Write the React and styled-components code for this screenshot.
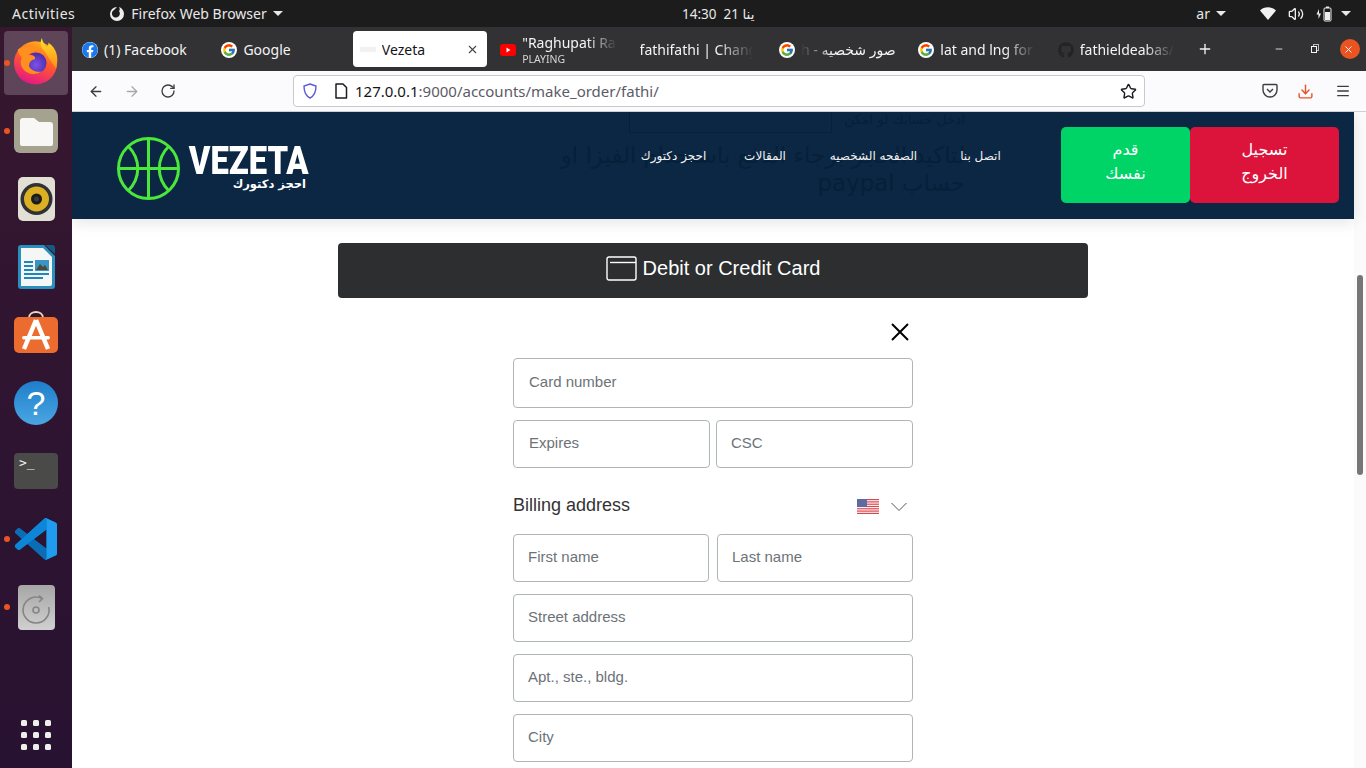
import styled, { createGlobalStyle } from 'styled-components';
import { ArrowLeft, ArrowRight, RotateCw, Star, Download, Menu, X, Plus, Minus, Volume2 } from 'lucide-react';
import { FcGoogle } from 'react-icons/fc';
import { FaFacebook, FaGithub } from 'react-icons/fa';

const uiFont = `"Noto Sans", "DejaVu Sans", sans-serif`;
const arabicFont = `"DejaVu Sans", "Noto Sans", sans-serif`;
const formFont = `"Liberation Sans", Arial, sans-serif`;

const GlobalStyle = createGlobalStyle`
    html, body {
        margin: 0;
        padding: 0;
        width: 1366px;
        height: 768px;
        overflow: hidden;
        background: #2c1430;
    }
    * {
        box-sizing: border-box;
    }
`;

const Desktop = styled.div`
    width: 1366px;
    height: 768px;
    display: grid;
    grid-template-columns: 72px 1fr;
    grid-template-rows: 27px 1fr;
    overflow: hidden;
`;

/* ubuntu top bar */
const TopBar = styled.header`
    grid-column: 1 / 3;
    background: #1c1c1c;
    color: #e8e8e8;
    font: 14px ${uiFont};
    display: grid;
    grid-template-columns: 670px auto 1fr;
    align-items: center;
    padding: 0 12px;
`;

const TopLeft = styled.div`
    display: flex;
    align-items: center;
`;

const Activities = styled.span`
    letter-spacing: 0.5px;
`;

const AppMenu = styled.div`
    display: flex;
    align-items: center;
    gap: 6px;
    margin-left: 34px;
`;

const Caret = styled.span`
    display: inline-block;
    width: 0;
    height: 0;
    border-left: 5px solid transparent;
    border-right: 5px solid transparent;
    border-top: 5px solid #e8e8e8;
`;

const Clock = styled.div`
    display: flex;
    gap: 7px;
    font-size: 13.5px;
`;

const TopRight = styled.div`
    display: flex;
    justify-content: flex-end;
    align-items: center;
    padding-right: 3px;
`;

const Lang = styled.span`
    margin-right: 6px;
`;

const StatusIcon = styled.span`
    display: flex;
    margin-left: ${(p) => p.$gap}px;
`;

/* dock */
const Dock = styled.nav`
    background: linear-gradient(180deg, #37172f 0%, #2d1431 60%, #281231 100%);
    display: flex;
    flex-direction: column;
    align-items: center;
    padding: 2px 0 0;
`;

const DockItem = styled.div`
    position: relative;
    width: 72px;
    height: 68px;
    display: flex;
    align-items: center;
    justify-content: center;
    &::before {
        content: '';
        display: ${(p) => (p.$active ? 'block' : 'none')};
        position: absolute;
        left: 4px;
        top: 2px;
        width: 64px;
        height: 64px;
        border-radius: 4px;
        background: rgba(255, 255, 255, 0.2);
    }
    &::after {
        content: '';
        display: ${(p) => (p.$running ? 'block' : 'none')};
        position: absolute;
        left: 4px;
        top: 31px;
        width: 6px;
        height: 6px;
        border-radius: 50%;
        background: #e95420;
    }
    svg {
        position: relative;
        margin-bottom: ${(p) => p.$lift || 0}px;
    }
`;

const AppGrid = styled.div`
    margin-top: auto;
    margin-bottom: 18px;
    display: grid;
    grid-template-columns: repeat(3, 6px);
    grid-auto-rows: 6px;
    gap: 6px;
`;

const AppDot = styled.span`
    background: #eeeeec;
    border-radius: 1.5px;
`;

/* browser */
const Browser = styled.div`
    display: flex;
    flex-direction: column;
    min-width: 0;
    min-height: 0;
`;

const TabStrip = styled.div`
    height: 44px;
    flex: none;
    background: #323234;
    display: flex;
    align-items: center;
    position: relative;
    font: 14px ${uiFont};
    color: #f4f4f4;
`;

const Tab = styled.div`
    height: 36px;
    flex: none;
    display: flex;
    align-items: center;
    gap: 6px;
    padding-left: ${(p) => (p.$active ? '7px' : '10px')};
    padding-top: 1px;
    margin: ${(p) => (p.$active ? '0 3px 0 2px' : '0')};
    width: ${(p) => (p.$active ? '134.4px' : '139.4px')};
    border-radius: 4px;
    background: ${(p) => (p.$active ? '#ffffff' : 'transparent')};
    color: ${(p) => (p.$active ? '#15141a' : '#f4f4f4')};
`;

const fadeMask = {
    right: 'linear-gradient(90deg, #000 60%, transparent 88%)',
    left: 'linear-gradient(90deg, transparent 0%, #000 30%)',
    none: 'none',
};

const TabLabel = styled.div`
    flex: 1;
    min-width: 0;
    white-space: nowrap;
    overflow: hidden;
    line-height: 18px;
    -webkit-mask-image: ${(p) => fadeMask[p.$fade || 'none']};
    mask-image: ${(p) => fadeMask[p.$fade || 'none']};
`;

const TabSub = styled.div`
    font-size: 10.5px;
    line-height: 14px;
    color: #d6d6d6;
`;

const Favicon = styled.span`
    width: 16px;
    height: 16px;
    flex: none;
    display: flex;
    align-items: center;
    justify-content: center;
    border-radius: 50%;
    background: ${(p) => (p.$plain ? 'transparent' : '#fff')};
`;

const TabClose = styled.span`
    display: flex;
    margin-right: 8px;
    color: #444;
`;

const FaintIcon = styled.span`
    width: 16px;
    height: 16px;
    flex: none;
    opacity: 0.1;
    background: linear-gradient(180deg, transparent 30%, #777 30%, #777 60%, transparent 60%);
`;

const NewTab = styled.button`
    border: 0;
    padding: 0;
    margin-left: 10px;
    background: none;
    color: #f4f4f4;
    display: flex;
`;

const WinControls = styled.div`
    margin-left: auto;
    margin-right: 6px;
    display: flex;
    align-items: center;
    gap: 23px;
    color: #f4f4f4;
    svg:first-child {
        margin-right: 4px;
    }
`;

const RestoreIcon = styled.span`
    width: 6px;
    height: 7px;
    border: 1px solid #f4f4f4;
    box-shadow: 2px -2px 0 -1px #323234, 2px -2px 0 0 #b9b9b9;
`;

const CloseCircle = styled.span`
    width: 20px;
    height: 20px;
    border-radius: 50%;
    background: #e95420;
    color: #fff;
    display: flex;
    align-items: center;
    justify-content: center;
`;

const NavBar = styled.div`
    height: 41px;
    flex: none;
    background: #fbfbfd;
    border-bottom: 1px solid #cfcfd2;
    display: flex;
    align-items: center;
    color: #3d3d40;
    padding-left: 16px;
`;

const NavButton = styled.span`
    display: flex;
    width: 16px;
    margin-right: 20px;
    color: ${(p) => (p.$disabled ? '#a9a9ad' : '#3d3d40')};
`;

const UrlBar = styled.div`
    width: 852px;
    height: 32px;
    margin-left: 97px;
    border: 1px solid #c9c9cc;
    border-radius: 4px;
    background: #fff;
    display: flex;
    align-items: center;
    padding: 0 7px 0 8px;
    font: 15px ${uiFont};
    color: #15141a;
`;

const UrlIcons = styled.span`
    display: flex;
    align-items: center;
    gap: 16px;
    margin-right: 7px;
`;

const UrlHost = styled.span`
    color: #15141a;
`;

const UrlPath = styled.span`
    color: #5b5b66;
`;

const UrlStar = styled.span`
    margin-left: auto;
    display: flex;
`;

const ToolIcons = styled.div`
    margin-left: 117px;
    display: flex;
    align-items: center;
`;

const ToolIcon = styled.span`
    display: flex;
    margin-right: ${(p) => p.$gap}px;
    color: ${(p) => p.$color || '#3d3d40'};
`;

/* page */
const Viewport = styled.div`
    flex: 1;
    min-height: 0;
    display: flex;
    background: #fff;
    overflow: hidden;
`;

const Page = styled.main`
    flex: 1;
    min-width: 0;
`;

const SiteHeader = styled.div`
    position: relative;
    height: 107px;
    background: #0b2743;
    box-shadow: 0 4px 14px rgba(0, 0, 0, 0.1);
    display: flex;
    align-items: center;
    padding: 0 15px 0 45px;
`;

const GhostContent = styled.div`
    position: absolute;
    right: 389px;
    top: -8px;
    width: 420px;
    direction: rtl;
    color: #06203a;
    font: 22.9px/28px ${arabicFont};
`;

const GhostRow = styled.div`
    display: flex;
    align-items: center;
    gap: 12px;
    height: 29px;
    margin-bottom: 8px;
    font-size: 13.5px;
`;

const GhostBox = styled.div`
    width: 203px;
    height: 29px;
    border: 1px solid #06203a;
`;

const Logo = styled.div`
    position: relative;
    display: flex;
    align-items: center;
    gap: 10px;
    padding-top: 6px;
    width: 191px;
    flex: none;
    svg {
        flex: none;
    }
`;

const LogoWords = styled.div`
    width: 118px;
    flex: none;
    display: flex;
    flex-direction: column;
    align-items: flex-end;
    color: #fff;
`;

const LogoName = styled.div`
    font: 900 39px/30px Roboto, sans-serif;
    white-space: nowrap;
    transform: scaleX(0.84);
    transform-origin: right center;
`;

const LogoTag = styled.div`
    font: 700 11.5px/16px ${arabicFont};
    margin-right: 2px;
    white-space: nowrap;
`;

const SiteNav = styled.div`
    position: relative;
    margin: 0 0 20px 333px;
    display: grid;
    grid-template-columns: 65px 46px 99px 43px;
    column-gap: 36px;
    justify-items: center;
    color: #f2f2f2;
    font: 12px ${arabicFont};
    white-space: nowrap;
`;

const AuthButtons = styled.div`
    position: relative;
    margin: 0 0 1px auto;
    display: flex;
    height: 76px;
`;

const AuthButton = styled.button`
    width: ${(p) => p.$width}px;
    border: 0;
    border-radius: 5px;
    color: #fff;
    background: ${(p) => p.$bg};
    font: 16px/24px ${arabicFont};
    padding: 0 32px 6px;
`;

const Content = styled.div`
    width: 750px;
    margin: 24px auto 0;
`;

const PayButton = styled.button`
    width: 100%;
    height: 55px;
    border: 0;
    border-radius: 4px;
    background: #2c2e2f;
    color: #fff;
    font: 20px ${formFont};
    display: flex;
    align-items: center;
    justify-content: center;
    gap: 6px;
    padding: 0 0 4px;
`;

const CardForm = styled.form`
    width: 400px;
    margin: 0 auto;
`;

const CloseRow = styled.div`
    height: 60px;
    display: flex;
    align-items: center;
    justify-content: flex-end;
    padding: 8px 4px 0 0;
`;

const FieldRow = styled.div`
    display: grid;
    grid-template-columns: 1fr 1fr;
    column-gap: ${(p) => p.$gap}px;
    margin-bottom: 12px;
`;

const Field = styled.input`
    display: block;
    width: 100%;
    height: ${(p) => p.$height || 48}px;
    border: 1px solid #b0b5b8;
    border-radius: 4px;
    padding: 0 0 3px ${(p) => p.$pad || 14}px;
    background: #fff;
    font: 15px ${formFont};
    margin-bottom: ${(p) => p.$mb || 0}px;
    &::placeholder {
        color: #6c7378;
        opacity: 1;
    }
`;

const BillingRow = styled.div`
    height: 66px;
    margin-top: -12px;
    display: flex;
    align-items: center;
    justify-content: space-between;
    color: #333;
    font: 18px ${formFont};
    padding: 8px 5px 0 0;
`;

const BillingSide = styled.div`
    display: flex;
    align-items: center;
    gap: 11px;
    padding-top: 3px;
`;

/* scrollbar */
const ScrollTrack = styled.div`
    width: 12px;
    flex: none;
    background: #fbfbfb;
    padding: 163px 3px 0 3px;
`;

const ScrollThumb = styled.div`
    height: 200px;
    border-radius: 3px;
    background: #767676;
`;

const FirefoxIcon = () => (
    <svg width="46" height="48" viewBox="0 0 48 50">
        <defs>
            <linearGradient id="ffBody" x1="0.7" y1="0" x2="0.3" y2="1">
                <stop offset="0" stopColor="#ffb516" />
                <stop offset="0.45" stopColor="#ff5a2c" />
                <stop offset="1" stopColor="#e3148c" />
            </linearGradient>
            <linearGradient id="ffFlame" x1="0.5" y1="0" x2="0.5" y2="1">
                <stop offset="0" stopColor="#ffe226" />
                <stop offset="1" stopColor="#ff8a1c" />
            </linearGradient>
            <radialGradient id="ffGlobe" cx="0.5" cy="0.6" r="0.6">
                <stop offset="0" stopColor="#7d52e8" />
                <stop offset="1" stopColor="#4b2aa8" />
            </radialGradient>
        </defs>
        <circle cx="23.5" cy="27" r="22.5" fill="url(#ffBody)" />
        <path d="M30 1 C27 8 30 12 33 15 L45 33 C48 22 46 12 37 6 C37 9 36 10 35 10 C33 8 31 5 30 1 Z" fill="url(#ffFlame)" />
        <circle cx="24" cy="27" r="11" fill="url(#ffGlobe)" />
        <path d="M5 13 C10 9 22 8 30 15 C24 13 18 15 16 19 C20 18 24 20 23 23 C19 24 16 27 17 31 C19 35 25 37 30 36 C21 42 9 37 8 27 C8 24 9 23 9 21 C7 19 5 17 5 13 Z" fill="#ff8f1e" />
    </svg>
);

const FilesIcon = () => (
    <svg width="44" height="44" viewBox="0 0 44 44">
        <rect width="44" height="44" rx="6" fill="#a5a28f" />
        <path d="M6 12 a3 3 0 0 1 3 -3 h11 l5 4 h11 a3 3 0 0 1 3 3 v19 a2 2 0 0 1 -2 2 h-29 a2 2 0 0 1 -2 -2 Z" fill="#f8f7f5" />
    </svg>
);

const SpeakerIcon = () => (
    <svg width="37" height="44" viewBox="0 0 37 44">
        <rect width="37" height="44" rx="5" fill="#e2dfd4" />
        <circle cx="18.5" cy="22" r="16" fill="#2f3136" />
        <circle cx="18.5" cy="22" r="12.5" fill="#dcb022" />
        <circle cx="18.5" cy="22" r="5.5" fill="#1b1b1b" />
        <circle cx="18.5" cy="22" r="2.5" fill="#3a3a3a" />
    </svg>
);

const WriterIcon = () => (
    <svg width="37" height="45" viewBox="0 0 37 45">
        <path d="M3 0 H26 L37 11 V41 a3 3 0 0 1 -3 3 H3 a3 3 0 0 1 -3 -3 V3 a3 3 0 0 1 3 -3 Z" fill="#2a8fbd" />
        <path d="M3 3 H25 L34 12 V39 a2 2 0 0 1 -2 2 H3 Z" fill="#f5f6f6" />
        <path d="M27 0 H34 a3 3 0 0 1 3 3 V9 Z" fill="#155c82" />
        <path d="M6 17 H15 M6 21 H15 M6 25 H15 M6 29 H31 M6 33 H25" stroke="#1f88ba" strokeWidth="1.8" />
        <rect x="17" y="15" width="14" height="11" fill="#3b95c4" />
        <path d="M18 25 L22 19 L25 22 L27 20 L30 25 Z" fill="#4c4a3f" />
    </svg>
);

const StoreIcon = () => (
    <svg width="44" height="42" viewBox="0 0 44 42">
        <path d="M15 7 C15 -1 29 -1 29 7" fill="none" stroke="#eed7b6" strokeWidth="2" />
        <rect y="6" width="44" height="36" rx="5" fill="#ec6b2e" />
        <path d="M22 9 L10 38 M22 9 L34 38" stroke="#fff" strokeWidth="4.5" fill="none" />
        <rect x="8" y="25" width="28" height="3.5" rx="1.7" fill="#fff" />
    </svg>
);

const HelpIcon = () => (
    <svg width="44" height="44" viewBox="0 0 44 44">
        <defs>
            <linearGradient id="helpBg" x1="0" y1="0" x2="0" y2="1">
                <stop offset="0" stopColor="#1f7ecb" />
                <stop offset="1" stopColor="#4aa6e2" />
            </linearGradient>
        </defs>
        <circle cx="22" cy="22" r="22" fill="url(#helpBg)" />
        <text x="22" y="34" textAnchor="middle" fontSize="34" fontFamily="Liberation Sans" fill="#fff">?</text>
    </svg>
);

const TerminalIcon = () => (
    <svg width="44" height="36" viewBox="0 0 44 36">
        <rect width="44" height="36" rx="4" fill="#4a4a48" />
        <text x="5" y="14" fontSize="13" fontFamily="DejaVu Sans Mono" fill="#f0f0f0">&gt;_</text>
    </svg>
);

const CodeIcon = () => (
    <svg width="42" height="42" viewBox="0 0 100 100">
        <path
            fillRule="evenodd"
            d="M96.5 10.8 L75.9 .9 c-2.4-1.1-5.2-.6-7.1 1.2 L29.4 38 11.8 24.7 c-1.6-1.2-3.9-1.1-5.4.2 L.9 30 c-1.8 1.6-1.8 4.5 0 6.1 L16 50 .9 63.8 c-1.8 1.6-1.8 4.5 0 6.1 l5.5 5 c1.5 1.3 3.8 1.4 5.4.2 L29.4 62 68.8 97.9 c1.9 1.9 4.7 2.3 7.1 1.2 l20.6-9.9 c2.2-1 3.5-3.1 3.5-5.5 V16.3 c0-2.4-1.4-4.5-3.5-5.5 Z M75 72.7 45.1 50 75 27.3 Z"
            fill="#0a6db5"
        />
        <path d="M75 27.3 L45.1 50 L16 72 11.8 75.3 c-1.6 1.2-3.9 1.1-5.4-.2 L.9 70 c-1.8-1.6-1.8-4.5 0-6.1 L68.8 2.1 c2-2 6.2-.7 6.2 2.6 Z" fill="#0d86d8" />
        <path d="M75.9 99.1 c-2.4 1.1-5.2.6-7.1-1.2 c2.4 2.4 6.2.7 6.2-2.6 V4.7 c0-3.3-3.8-5-6.2-2.6 c1.9-1.9 4.7-2.3 7.1-1.2 l20.6 9.9 c2.2 1 3.5 3.1 3.5 5.5 v67.4 c0 2.4-1.4 4.5-3.5 5.5 Z" fill="#1f9cf0" />
    </svg>
);

const DiskIcon = () => (
    <svg width="37" height="45" viewBox="0 0 37 45">
        <defs>
            <linearGradient id="diskBg" x1="0" y1="0" x2="0" y2="1">
                <stop offset="0" stopColor="#a6a6a6" />
                <stop offset="1" stopColor="#d0d0d0" />
            </linearGradient>
        </defs>
        <rect width="37" height="45" rx="4" fill="url(#diskBg)" />
        <path d="M24 13.5 A13 13 0 1 0 30.7 22 M21 10.5 L24.5 13.5 L21 17" fill="none" stroke="#858585" strokeWidth="1.6" />
        <circle cx="18" cy="25" r="3" fill="none" stroke="#858585" strokeWidth="1.6" />
    </svg>
);

const ShieldIcon = () => (
    <svg width="16" height="16" viewBox="0 0 16 16">
        <path d="M8 1 L14 3 C14 9 12 13 8 15 C4 13 2 9 2 3 Z" fill="none" stroke="#5b5bd6" strokeWidth="1.4" />
    </svg>
);

const PageIcon = () => (
    <svg width="14" height="16" viewBox="0 0 14 16">
        <path d="M2 1 H9 L12.5 4.5 V15 H2 Z" fill="none" stroke="#1c1b22" strokeWidth="1.5" strokeLinejoin="round" />
    </svg>
);

const PocketIcon = () => (
    <svg width="16" height="16" viewBox="0 0 16 16">
        <path d="M2 1.5 H14 a1 1 0 0 1 1 1 V7 A7 7 0 0 1 1 7 V2.5 a1 1 0 0 1 1 -1 Z" fill="none" stroke="#3d3d40" strokeWidth="1.4" />
        <path d="M5 6 L8 9 L11 6" fill="none" stroke="#3d3d40" strokeWidth="1.4" />
    </svg>
);

const YoutubeIcon = () => (
    <svg width="16" height="12" viewBox="0 0 16 12">
        <rect width="16" height="12" rx="3" fill="#f00" />
        <path d="M6.5 3.5 L10.5 6 L6.5 8.5 Z" fill="#fff" />
    </svg>
);

const WifiIcon = () => (
    <svg width="16" height="13" viewBox="0 0 16 13">
        <path d="M0 3.5 C4 -0.8 12 -0.8 16 3.5 L8 13 Z" fill="#f2f2f2" />
    </svg>
);

const BatteryIcon = () => (
    <svg width="16" height="16" viewBox="0 0 16 16">
        <path d="M3 3 L0.5 8.5 H2.5 V13 L5 7.5 H3 Z" fill="#eee" />
        <rect x="8" y="2" width="7" height="13" rx="1" fill="none" stroke="#eee" strokeWidth="1" />
        <rect x="10" y="0.5" width="3" height="1.5" fill="#eee" />
        <rect x="9" y="6" width="5" height="8" fill="#eee" />
    </svg>
);

const GnomeFirefox = () => (
    <svg width="16" height="16" viewBox="0 0 16 16">
        <path d="M8 1 A7 7 0 1 0 15 8 C15 5 13 2 10 1 C11 3 11 4 10 5 A4 4 0 1 1 5 4 C6 3 7 2 8 1 Z" fill="#ededed" />
    </svg>
);

const CardIcon = () => (
    <svg width="31" height="25" viewBox="0 0 31 25">
        <rect x="1" y="1" width="29" height="23" rx="2" fill="none" stroke="#fff" strokeWidth="1.4" />
        <path d="M4 6.5 H30" stroke="#fff" strokeWidth="1.4" />
    </svg>
);

const CloseCross = () => (
    <svg width="18" height="18" viewBox="0 0 18 18">
        <path d="M1 1 L17 17 M17 1 L1 17" stroke="#000" strokeWidth="2" />
    </svg>
);

const ThinChevron = () => (
    <svg width="18" height="10" viewBox="0 0 18 10">
        <path d="M1.5 1 L9 8.5 L16.5 1" fill="none" stroke="#555" strokeWidth="1" />
    </svg>
);

const Logoball = () => (
    <svg width="63" height="63" viewBox="0 0 63 63" fill="none" stroke="#4be83c" strokeWidth="3">
        <circle cx="31.5" cy="31.5" r="30" />
        <path d="M31.5 1.5 V61.5 M1.5 31.5 H61.5" />
        <path d="M11 9 C24 22 24 41 11 54 M52 9 C39 22 39 41 52 54" />
    </svg>
);

const FlagIcon = () => (
    <svg width="22" height="15" viewBox="0 0 22 15">
        <rect width="22" height="15" fill="#fff" />
        {[0, 2.3, 4.6, 6.9, 9.2, 11.5, 13.8].map((y) => (
            <rect key={y} y={y} width="22" height="1.2" fill="#d8474e" />
        ))}
        <rect width="10" height="8" fill="#5f6a9e" />
    </svg>
);

const googleIcon = <Favicon><FcGoogle size={14} /></Favicon>;

const tabs = [
    { title: '(1) Facebook', icon: <Favicon><FaFacebook size={16} color="#1877f2" /></Favicon> },
    { title: 'Google', icon: googleIcon },
    { title: 'Vezeta', active: true },
    { title: '"Raghupati Raghav', sub: 'PLAYING', fade: 'right', icon: <Favicon $plain><YoutubeIcon /></Favicon> },
    { title: 'fathifathi | Change', fade: 'right' },
    { title: 'h - صور شخصيه', fade: 'left', icon: googleIcon },
    { title: 'lat and lng for', fade: 'right', icon: googleIcon },
    { title: 'fathieldeabas/', fade: 'right', icon: <Favicon $plain><FaGithub size={16} color="#232326" /></Favicon> },
];

const dockApps = [
    { icon: <FirefoxIcon />, running: true, active: true, lift: 4 },
    { icon: <FilesIcon />, running: true },
    { icon: <SpeakerIcon /> },
    { icon: <WriterIcon /> },
    { icon: <StoreIcon />, lift: 6 },
    { icon: <HelpIcon /> },
    { icon: <TerminalIcon /> },
    { icon: <CodeIcon />, running: true },
    { icon: <DiskIcon />, running: true },
];

const siteLinks = ['احجز دكتورك', 'المقالات', 'الصفحه الشخصيه', 'اتصل بنا'];

const App = () => {
    return (
        <Desktop>
            <GlobalStyle />
            <TopBar>
                <TopLeft>
                    <Activities>Activities</Activities>
                    <AppMenu>
                        <GnomeFirefox />
                        <span>Firefox Web Browser</span>
                        <Caret />
                    </AppMenu>
                </TopLeft>
                <Clock>
                    <span>14:30</span>
                    <span>21 ينا</span>
                </Clock>
                <TopRight>
                    <Lang>ar</Lang>
                    <Caret />
                    <StatusIcon $gap={34}><WifiIcon /></StatusIcon>
                    <StatusIcon $gap={12}><Volume2 size={16} color="#eee" /></StatusIcon>
                    <StatusIcon $gap={12}><BatteryIcon /></StatusIcon>
                    <StatusIcon $gap={9}><Caret /></StatusIcon>
                </TopRight>
            </TopBar>

            <Dock>
                {dockApps.map((app, i) => (
                    <DockItem key={i} $active={app.active} $running={app.running} $lift={app.lift}>{app.icon}</DockItem>
                ))}
                <AppGrid>
                    {Array.from({ length: 9 }).map((_, i) => <AppDot key={i} />)}
                </AppGrid>
            </Dock>

            <Browser>
                <TabStrip>
                    {tabs.map((tab) => (
                        <Tab key={tab.title} $active={tab.active}>
                            {tab.active ? <FaintIcon /> : tab.icon}
                            <TabLabel $fade={tab.fade}>
                                {tab.title}
                                {tab.sub && <TabSub>{tab.sub}</TabSub>}
                            </TabLabel>
                            {tab.active && <TabClose><X size={13} /></TabClose>}
                        </Tab>
                    ))}
                    <NewTab><Plus size={16} /></NewTab>
                    <WinControls>
                        <Minus size={10} />
                        <RestoreIcon />
                        <CloseCircle><X size={11} /></CloseCircle>
                    </WinControls>
                </TabStrip>

                <NavBar>
                    <NavButton><ArrowLeft size={17} /></NavButton>
                    <NavButton $disabled><ArrowRight size={17} /></NavButton>
                    <NavButton><RotateCw size={16} /></NavButton>
                    <UrlBar>
                        <UrlIcons>
                            <ShieldIcon />
                            <PageIcon />
                        </UrlIcons>
                        <UrlHost>127.0.0.1</UrlHost>
                        <UrlPath>:9000/accounts/make_order/fathi/</UrlPath>
                        <UrlStar><Star size={17} color="#1c1b22" /></UrlStar>
                    </UrlBar>
                    <ToolIcons>
                        <ToolIcon $gap={19}><PocketIcon /></ToolIcon>
                        <ToolIcon $gap={21} $color="#e2572b"><Download size={17} /></ToolIcon>
                        <ToolIcon $gap={0}><Menu size={16} /></ToolIcon>
                    </ToolIcons>
                </NavBar>

                <Viewport>
                    <Page>
                        <SiteHeader>
                            <GhostContent>
                                <GhostRow>
                                    <span>ادخل حسابك لو امكن</span>
                                    <GhostBox />
                                </GhostRow>
                                لتاكيد الحجز برجاء الدفع باستخدام الفيزا او حساب paypal
                            </GhostContent>
                            <Logo>
                                <Logoball />
                                <LogoWords>
                                    <LogoName>VEZETA</LogoName>
                                    <LogoTag>احجز دكتورك</LogoTag>
                                </LogoWords>
                            </Logo>
                            <SiteNav>
                                {siteLinks.map((link) => <span key={link}>{link}</span>)}
                            </SiteNav>
                            <AuthButtons>
                                <AuthButton $bg="#00d466" $width={129}>قدم نفسك</AuthButton>
                                <AuthButton $bg="#dc143c" $width={149}>تسجيل الخروج</AuthButton>
                            </AuthButtons>
                        </SiteHeader>

                        <Content>
                            <PayButton type="button">
                                <CardIcon />
                                Debit or Credit Card
                            </PayButton>
                            <CardForm>
                                <CloseRow><CloseCross /></CloseRow>
                                <Field placeholder="Card number" $height={50} $pad={15} $mb={12} />
                                <FieldRow $gap={6}>
                                    <Field placeholder="Expires" $pad={15} />
                                    <Field placeholder="CSC" $pad={14} />
                                </FieldRow>
                                <BillingRow>
                                    <span>Billing address</span>
                                    <BillingSide>
                                        <FlagIcon />
                                        <ThinChevron />
                                    </BillingSide>
                                </BillingRow>
                                <FieldRow $gap={8}>
                                    <Field placeholder="First name" />
                                    <Field placeholder="Last name" />
                                </FieldRow>
                                <Field placeholder="Street address" $mb={12} />
                                <Field placeholder="Apt., ste., bldg." $mb={12} />
                                <Field placeholder="City" $mb={12} />
                            </CardForm>
                        </Content>
                    </Page>
                    <ScrollTrack>
                        <ScrollThumb />
                    </ScrollTrack>
                </Viewport>
            </Browser>
        </Desktop>
    );
};

export default App;
